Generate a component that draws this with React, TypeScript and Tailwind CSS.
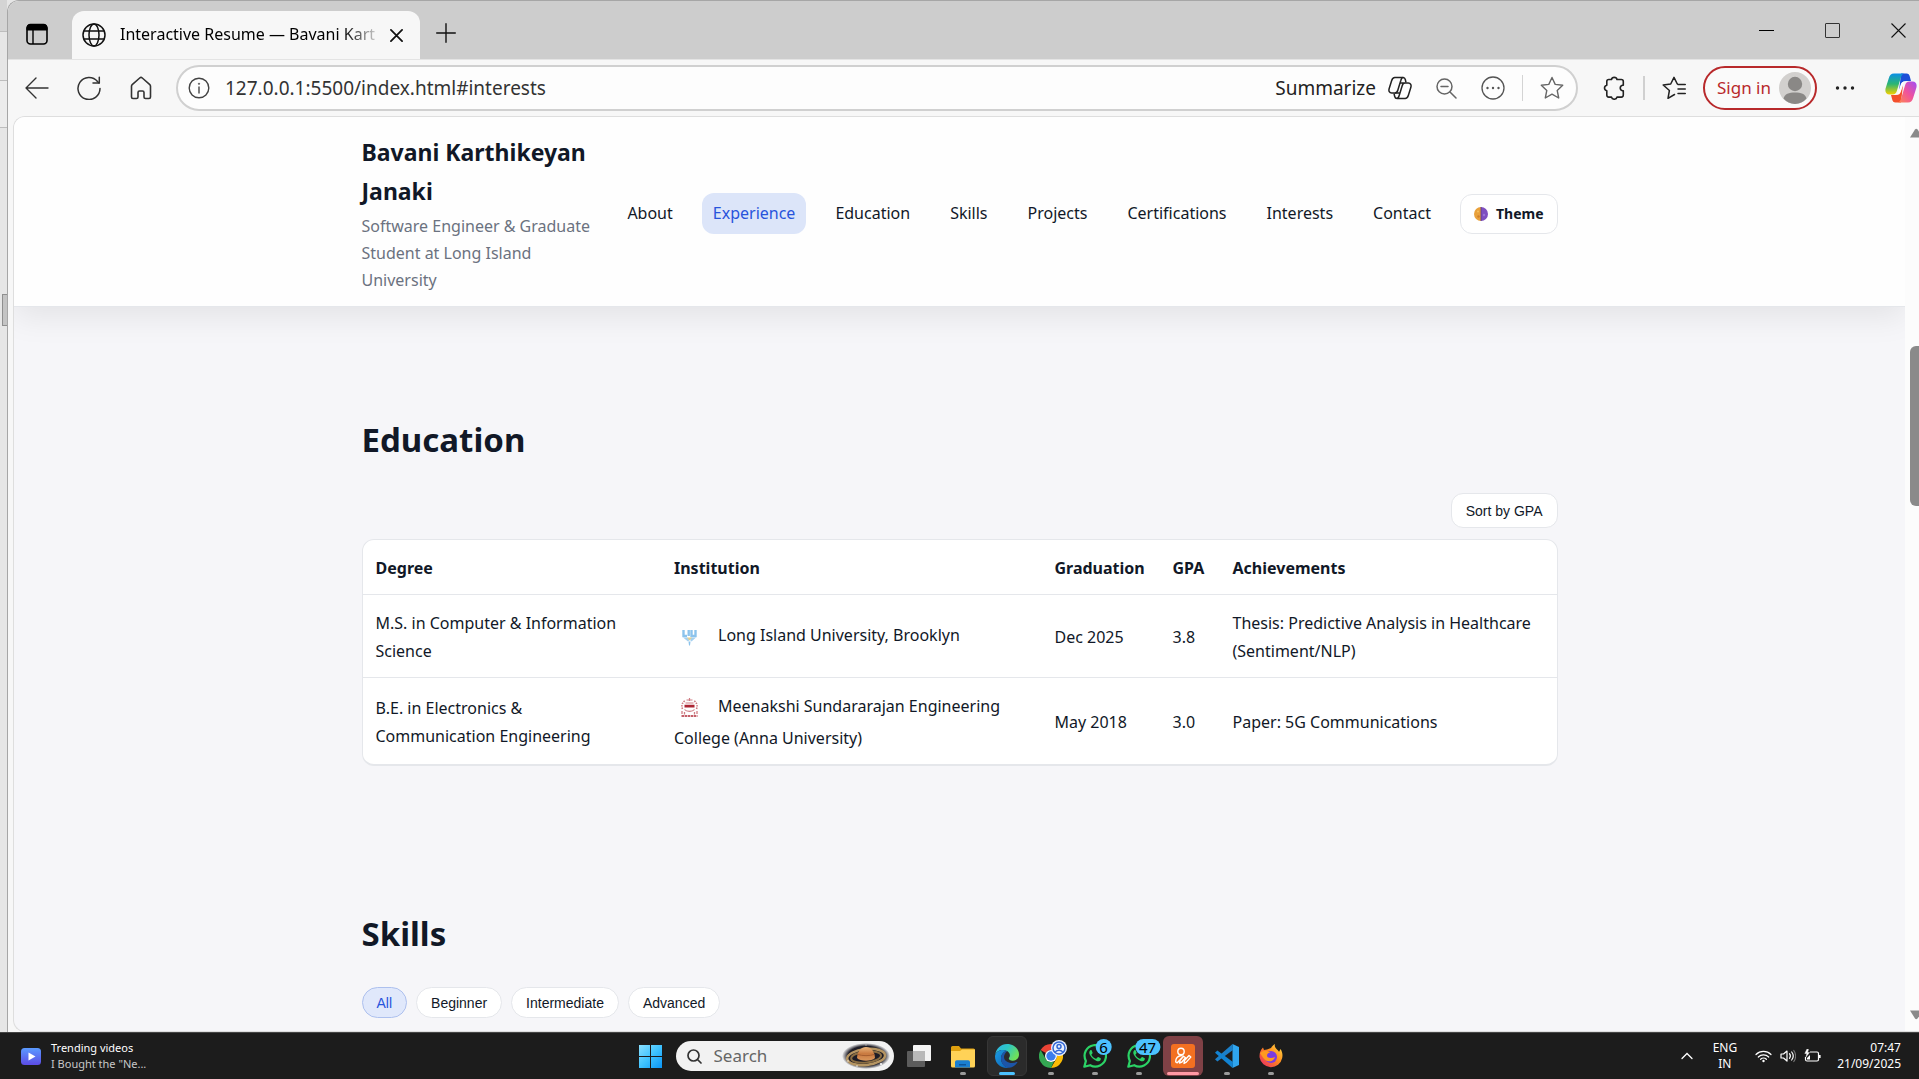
import React from "react";

type IconProps = { className?: string };

/* ---------- browser icons ---------- */

const TabActionsIcon = () => (
  <svg className="size-[22px]" viewBox="0 0 22 22" fill="none" stroke="#000">
    <rect x="1" y="1.5" width="20" height="19.5" rx="3.5" strokeWidth="1.6" />
    <path d="M1 7V5a3.500 3.500 0 0 1 3.500-3.500h13A3.500 3.500 0 0 1 21 5v2z" fill="#000" />
    <path d="M7 7v14" strokeWidth="1.4" />
  </svg>
);

const GlobeIcon = () => (
  <svg className="size-6 shrink-0" viewBox="0 0 24 24" fill="none" stroke="#111" strokeWidth="1.5">
    <circle cx="12" cy="12" r="11" />
    <ellipse cx="12" cy="12" rx="5" ry="11" />
    <path d="M2 8h20M2 16h20" />
  </svg>
);

const TabCloseIcon = () => (
  <svg className="size-[13px]" viewBox="0 0 14 14" fill="none" stroke="#111" strokeWidth="1.900" strokeLinecap="round">
    <path d="M1 1l12 12M13 1L1 13" />
  </svg>
);

const WindowCloseIcon = () => (
  <svg className="size-[15px]" viewBox="0 0 15 15" fill="none" stroke="#111" strokeWidth="1.100">
    <path d="M.5 .5l14 14M14.500 .5l-14 14" />
  </svg>
);

const PlusIcon = () => (
  <svg className="size-5" viewBox="0 0 20 20" fill="none" stroke="#111" strokeWidth="1.4" strokeLinecap="round">
    <path d="M10 .7v18.600M.7 10h18.600" />
  </svg>
);

const BackIcon = () => (
  <svg className="size-6" viewBox="0 0 24 24" fill="none" stroke="#333" strokeWidth="1.4" strokeLinecap="round" strokeLinejoin="round">
    <path d="M23 12H1M11 2L1 12l10 10" />
  </svg>
);

const ReloadIcon = () => (
  <svg className="size-6" viewBox="0 0 24 24" fill="none" stroke="#333" strokeWidth="1.500" strokeLinecap="round" strokeLinejoin="round">
    <path d="M23 12.500A11 11 0 1 1 20.500 5.500L22 7" />
    <path d="M22.300 1.200V7H16" />
  </svg>
);

const HomeIcon = () => (
  <svg className="size-6" viewBox="0 0 24 24" fill="none" stroke="#333" strokeWidth="1.600" strokeLinejoin="round">
    <path d="M2.500 10.200a2 2 0 0 1 .7-1.500L10.700 2a2 2 0 0 1 2.600 0l7.500 6.700a2 2 0 0 1 .7 1.500V21a1.500 1.500 0 0 1-1.500 1.500h-3.500A1.500 1.500 0 0 1 15 21v-4.500a1.500 1.500 0 0 0-1.500-1.500h-3A1.500 1.500 0 0 0 9 16.500V21a1.500 1.500 0 0 1-1.500 1.500H4A1.500 1.500 0 0 1 2.500 21z" />
  </svg>
);

const InfoIcon = () => (
  <svg className="size-[22px]" viewBox="0 0 22 22" fill="none" stroke="#444" strokeWidth="1.400">
    <circle cx="11" cy="11" r="9.800" />
    <path d="M11 10v6" strokeLinecap="round" />
    <circle cx="11" cy="6.800" r=".7" fill="#444" strokeWidth=".6" />
  </svg>
);

const CopilotOutlineIcon = () => (
  <svg className="size-6" viewBox="0 0 24 24" fill="none" stroke="#222" strokeWidth="1.500" strokeLinejoin="round">
    <path d="M6.800 1.500h8.200c1.300 0 2 .7 2.300 2l.7 3M6.800 1.500C5 1.500 4.200 2.800 3.600 4.700L1.200 12.500c-.8 2.500.2 4.500 2.500 4.500H7c1.500 0 2.300-1 2.800-2.700l3-9.800c.5-1.800 1.100-3 2.600-3" />
    <path d="M17.200 22.500H9c-1.300 0-2-.7-2.300-2L6 17.500M17.200 22.500c1.800 0 2.600-1.300 3.200-3.200l2.400-7.800c.8-2.500-.2-4.500-2.500-4.500H17c-1.500 0-2.300 1-2.800 2.700l-3 9.800c-.5 1.800-1.100 3-2.600 3M12 7h5M7 17h5" />
  </svg>
);

const ZoomOutIcon = () => (
  <svg className="size-[21px]" viewBox="0 0 21 21" fill="none" stroke="#666" strokeWidth="1.500" strokeLinecap="round">
    <circle cx="8.500" cy="8.500" r="7.500" />
    <path d="M5 8.500h7M14 14l6 6" />
  </svg>
);

const CircleDotsIcon = () => (
  <svg className="size-6" viewBox="0 0 24 24" fill="none" stroke="#555" strokeWidth="1.300">
    <circle cx="12" cy="12" r="11" />
    <g fill="#555" stroke="none">
      <circle cx="6.500" cy="12" r="1.200" />
      <circle cx="12" cy="12" r="1.200" />
      <circle cx="17.500" cy="12" r="1.200" />
    </g>
  </svg>
);

const StarIcon = () => (
  <svg className="size-6" viewBox="0 0 24 24" fill="none" stroke="#666" strokeWidth="1.400" strokeLinejoin="round">
    <path d="M12 1.500l3.200 6.900 7.500.9-5.500 5.100 1.500 7.600L12 18.200 5.300 22l1.500-7.600L1.300 9.300l7.500-.9z" />
  </svg>
);

const PuzzleIcon = () => (
  <svg className="size-6" viewBox="0 0 24 24" fill="none" stroke="#222" strokeWidth="1.600" strokeLinejoin="round">
    <path d="M9.500 3.500a2.800 2.600 0 0 1 5.500 0h4.300A2 2 0 0 1 21.300 5.500v3.800H20.500a2.800 2.800 0 0 0 0 5.500h.8v4.300a2 2 0 0 1-2 2H15a2.800 2.600 0 0 1-5.500 0H6.800a2 2 0 0 1-2-2v-4.300a2.800 2.800 0 0 1 0-5.500V5.500a2 2 0 0 1 2-2z" />
  </svg>
);

const FavoritesIcon = () => (
  <svg className="size-6" viewBox="0 0 24 24" fill="none" stroke="#222" strokeWidth="1.500" strokeLinejoin="round" strokeLinecap="round">
    <path d="M12.500 18.500L6 22.300l1.400-7.800L1.200 9l7.500-1L12 1.300 15.300 8M16 8.500h7.300M16 13h7.300M16 17.500h7.300" />
  </svg>
);

const AvatarIcon = () => (
  <svg className="size-8" viewBox="0 0 32 32">
    <circle cx="16" cy="16" r="16" fill="#d2d0ce" />
    <circle cx="16" cy="12" r="7.200" fill="#8a8886" />
    <path d="M4.500 26.500C5.500 22 10 20.500 16 20.500s10.500 1.500 11.500 6A16 16 0 0 1 16 32a16 16 0 0 1-11.500-5.500z" fill="#8a8886" />
  </svg>
);

const DotsIcon = () => (
  <svg className="h-2 w-5" viewBox="0 0 20 8" fill="#222">
    <circle cx="2.500" cy="4" r="1.700" />
    <circle cx="10" cy="4" r="1.700" />
    <circle cx="17.500" cy="4" r="1.700" />
  </svg>
);

const CopilotIcon = () => (
  <svg className="size-8" viewBox="0 0 32 32">
    <defs>
      <linearGradient id="cpA" x1="0" y1="0" x2="0" y2="1">
        <stop offset="0" stopColor="#0a8fe8" />
        <stop offset=".5" stopColor="#2bb673" />
        <stop offset="1" stopColor="#f5d000" />
      </linearGradient>
      <linearGradient id="cpB" x1="1" y1="0" x2="0" y2="1">
        <stop offset="0" stopColor="#a04cf5" />
        <stop offset=".5" stopColor="#f0529c" />
        <stop offset="1" stopColor="#ff8a4c" />
      </linearGradient>
    </defs>
    <path d="M16 1.500h5.500c2 0 2.800 1 3.300 3L26 9h-5c-3 0-4 1-5 4l-2 6z" fill="#1b4fd8" />
    <path d="M16 30.500h-5.500c-2 0-2.800-1-3.300-3L6 23h5c3 0 4-1 5-4l2-6z" fill="#f4502c" />
    <path d="M9 1.500h11c-2.500 0-3.500 2-4.300 4.500L12 18.500c-.8 2.700-2 4-4.500 4H4.500c-3.500 0-4.800-3-3.800-6.500l3-9.500C4.700 3 6 1.500 9 1.500z" fill="url(#cpA)" />
    <path d="M23 30.500H12c2.500 0 3.500-2 4.300-4.500L20 13.500c.8-2.700 2-4 4.500-4h3c3.500 0 4.800 3 3.800 6.500l-3 9.500c-1 3.500-2.300 5-5.300 5z" fill="url(#cpB)" />
    <path d="M20 9.500c-3 0-3.800 1.500-4.600 4l-2.200 7c-.5 1.600-1 2-2.200 2 3 0 4.200-1.500 5-4l2-6.500c.4-1.500 1-2.500 2-2.500z" fill="#fff" />
  </svg>
);

/* ---------- page drawings ---------- */

const ThemeIcon = () => (
  <svg className="size-3.5" viewBox="0 0 14 14">
    <path d="M7 0a7 7 0 0 0 0 14z" fill="#e9a13b" />
    <path d="M7 0a7 7 0 0 1 0 14z" fill="#7e4fc0" />
    <path d="M7 0v14" stroke="#5b3a86" strokeWidth=".8" />
    <circle cx="4" cy="4.500" r="1" fill="#f3c060" />
    <circle cx="4.500" cy="9.500" r="1.200" fill="#cf7f2c" />
    <circle cx="10" cy="8" r="1.200" fill="#9a74d6" />
  </svg>
);

const LiuLogo = () => (
  <svg className="mr-3 inline-block size-8 align-middle" viewBox="0 0 32 32">
    <g fill="none" stroke="#8cc3ec" strokeWidth="2.400">
      <path d="M9.500 9v6h3.500M14.700 9v6M17.500 9v6h4V9" />
    </g>
    <path d="M9 16.500h4.500l2 2.500-1.500 1.500zM22 16.500h-4.500L16 19l1.500 1.500z" fill="#a5d0ef" />
    <path d="M13 16.500h5l-2.500 3z" fill="#e6cf8d" />
    <path d="M14.500 20.500h2l-.5 4h-1z" fill="#8cc3ec" />
  </svg>
);

const MeenakshiLogo = () => (
  <svg className="mr-3 inline-block size-8 align-middle" viewBox="0 0 32 32" fill="none" stroke="#cf7c83">
    <path d="M8.500 17c-1.500-3.500 0-7 3-8.500M22.500 17c1.500-3.500 0-7-3-8.500" strokeDasharray="1.500 1" strokeWidth="1.600" />
    <path d="M12.500 8h6M15.500 6v3M11.500 11h8" strokeWidth="1.200" />
    <path d="M10.500 14.200h10" stroke="#ad2634" strokeWidth="2.800" />
    <path d="M10.500 17.500c2 2.500 8 2.500 10 0" strokeWidth="1.200" />
    <path d="M8 19v3M10.500 20v2.500M20.500 20v2.500M23 19v3" strokeWidth="1.300" />
    <path d="M7.500 24h16" stroke="#c4606a" strokeWidth="2.200" strokeDasharray="2.500 .6" />
  </svg>
);

/* ---------- taskbar drawings ---------- */

const VideoIcon = () => (
  <svg className="h-[17px] w-5" viewBox="0 0 20 17">
    <defs>
      <linearGradient id="vid" x1="0" y1="0" x2="0" y2="1">
        <stop offset="0" stopColor="#5b9bff" />
        <stop offset="1" stopColor="#5c4be6" />
      </linearGradient>
    </defs>
    <rect width="20" height="17" rx="3.500" fill="url(#vid)" />
    <path d="M7.500 4.500v8l7-4z" fill="#fff" />
  </svg>
);

const WindowsIcon = () => (
  <svg className="size-[23px]" viewBox="0 0 23 23">
    <defs>
      <linearGradient id="win" x1="0" y1="0" x2="1" y2="1">
        <stop offset="0" stopColor="#8be0ff" />
        <stop offset=".5" stopColor="#3fc3ff" />
        <stop offset="1" stopColor="#0a94f5" />
      </linearGradient>
    </defs>
    <path d="M0 0h11v11H0zM12 0h11v11H12zM0 12h11v11H0zM12 12h11v11H12z" fill="url(#win)" />
  </svg>
);

const SearchIcon = () => (
  <svg className="size-[15px]" viewBox="0 0 15 15" fill="none" stroke="#333" strokeWidth="1.700" strokeLinecap="round">
    <circle cx="6.500" cy="6.500" r="5.500" />
    <path d="M10.500 10.500l3.500 3.500" />
  </svg>
);

const SaturnIcon = () => (
  <svg className="h-[26px] w-12" viewBox="0 0 48 26">
    <defs>
      <radialGradient id="sky">
        <stop offset=".75" stopColor="#1d1c26" />
        <stop offset="1" stopColor="#1d1c26" stopOpacity="0" />
      </radialGradient>
      <linearGradient id="ball" x1="0" y1="0" x2="0" y2="1">
        <stop offset="0" stopColor="#e9b57c" />
        <stop offset=".5" stopColor="#c9793f" />
        <stop offset="1" stopColor="#d9975c" />
      </linearGradient>
    </defs>
    <ellipse cx="24" cy="13" rx="24" ry="13" fill="url(#sky)" />
    <g transform="rotate(-6 24 13)" fill="none">
      <ellipse cx="24" cy="14" rx="19" ry="8" stroke="#b59562" strokeWidth="2.500" />
      <ellipse cx="24" cy="14" rx="15" ry="5.500" stroke="#8a6d42" strokeWidth="2" />
    </g>
    <path d="M15 15a9 11 0 0 1 18 0c-3 3.500-15 3.500-18 0z" fill="url(#ball)" />
    <path d="M16 11.500c4 1.500 12 1.500 16 0" stroke="#a65e30" fill="none" />
    <g fill="#fff">
      <circle cx="6" cy="18" r=".7" />
      <circle cx="39" cy="21" r="1" />
      <circle cx="24" cy="2" r=".5" />
      <circle cx="15" cy="23" r=".7" />
    </g>
  </svg>
);

const TaskViewIcon = () => (
  <svg className="h-[22px] w-6" viewBox="0 0 24 22">
    <rect x="6" y="0" width="18" height="16" rx="1" fill="#f4f4f4" />
    <rect x="0" y="6" width="18" height="16" rx="1" fill="#5c5c5c" />
    <path d="M6 6h12v10H6z" fill="#b9b9b9" />
  </svg>
);

const FolderIcon = () => (
  <svg className="size-6" viewBox="0 0 24 24">
    <path d="M0 3.500A1.500 1.500 0 0 1 1.500 2H8l2 2.500H22.500A1.500 1.500 0 0 1 24 6v4H0z" fill="#dfa00f" />
    <path d="M0 7h9l2-1.500h13V22a1.500 1.500 0 0 1-1.500 1.500h-21A1.500 1.500 0 0 1 0 22z" fill="#ffd257" />
    <path d="M4 23.500V18a1.800 1.800 0 0 1 1.800-1.800h11.400A1.800 1.800 0 0 1 19 18v5.500z" fill="#1a7fd1" />
    <path d="M8 20h7v1.500H8z" fill="#0d559a" />
  </svg>
);

const EdgeIcon = () => (
  <svg className="size-6" viewBox="0 0 24 24">
    <defs>
      <linearGradient id="edA" x1="0" y1="0" x2="1" y2=".5">
        <stop offset="0" stopColor="#2fb4ec" />
        <stop offset=".5" stopColor="#2dc6c4" />
        <stop offset="1" stopColor="#6fe05a" />
      </linearGradient>
      <linearGradient id="edB" x1="0" y1="0" x2="1" y2="1">
        <stop offset="0" stopColor="#1b9de2" />
        <stop offset="1" stopColor="#0d5fb4" />
      </linearGradient>
    </defs>
    <path d="M.3 10.500C1.200 4.500 6 0 12 0c7 0 12 5 12 10.500 0 4-2.800 6.200-6.200 6.200-2.500 0-4-1-4-2.200 0-.8 1.100-1.300 1.100-3.200C14.900 8.500 12 6 8 6 4 6 1.200 8 .3 10.500z" fill="url(#edA)" />
    <path d="M0 12.500C.2 8.500 4 6 8 6c1.500 0 3 .4 4.200 1.200C8.500 7.200 6 10.500 6 14.500c0 4.500 3.500 8.500 8 9.300C6 25 0 19.500 0 12.500z" fill="url(#edB)" />
    <path d="M9 13c0-2.200 1.200-4 3.200-5.800C9 6.800 5.800 10.500 6 14.800 6.200 20 10 24 14.300 23.800c3.500-.4 6.200-2.300 8-5.200.3-.5-.1-.8-.6-.6-6 2.700-12.700-.4-12.700-5z" fill="#1c55a8" />
  </svg>
);

const ChromeIcon = () => (
  <svg className="size-6" viewBox="0 0 24 24">
    <path d="M12 0a12 12 0 0 1 10.400 6H12a6 6 0 0 0-5.200 3L1.600 6A12 12 0 0 1 12 0z" fill="#ea4335" />
    <path d="M22.400 6A12 12 0 0 1 12 24l5.200-9a6 6 0 0 0 0-6z" fill="#fbbc05" />
    <path d="M22.400 6H12l5.200 3z" fill="#ea4335" />
    <path d="M1.600 6l5.200 9a6 6 0 0 0 5.200 3 6 6 0 0 0 3.200-.9L12 24A12 12 0 0 1 1.600 6z" fill="#34a853" />
    <circle cx="12" cy="12" r="6" fill="#fff" />
    <circle cx="12" cy="12" r="4.700" fill="#3b7ded" />
  </svg>
);

const ProfileBadge = () => (
  <svg className="absolute -right-1 -top-1 size-4" viewBox="0 0 16 16">
    <circle cx="8" cy="8" r="8" fill="#e8f0fe" />
    <g fill="none" stroke="#3367d6" strokeWidth="1.500">
      <circle cx="8" cy="8" r="6" />
      <circle cx="8" cy="6.500" r="2" />
      <path d="M4 12.500c1.500-3 6.500-3 8 0" />
    </g>
  </svg>
);

const WhatsAppIcon = () => (
  <svg className="size-6" viewBox="0 0 24 24">
    <path d="M1.300 22.700l1.600-5.800A10.700 10.700 0 1 1 7.200 21.200z" fill="none" stroke="#2bd366" strokeWidth="2.200" strokeLinejoin="round" />
    <path d="M8.700 6.500c-.3-.6-1-.6-1.400-.2C6 7.500 6 9.200 7 11c1.600 2.800 3.600 4.700 6.600 5.900 1.700.6 3.300.2 4-1 .3-.7.300-1.400.1-1.600l-2.400-1.200c-.4-.2-.6 0-.9.400l-.9 1.100c-.2.200-.5.200-.8.100-2-.9-3.200-2-4.200-3.800-.2-.3 0-.5.200-.7l.8-1c.1-.2.100-.4 0-.6z" fill="#2bd366" />
  </svg>
);

const PencilAppIcon = () => (
  <svg className="size-6" viewBox="0 0 24 24">
    <rect width="24" height="24" rx="3" fill="#f37021" />
    <g fill="none" stroke="#fff" strokeWidth="1.400" strokeLinejoin="round" strokeLinecap="round">
      <circle cx="10" cy="7.500" r="3.200" />
      <path d="M11 11.500c-4 0-6.500 2.500-6.300 6.500l1.500.8 6.300-6.500M13 19.500l.5-3 4.500-5 1.800 1.600-4.500 5zM8.500 19l.6-2.800 3.400-4 2 1.600-3.600 4.200z" />
    </g>
  </svg>
);

const VsCodeIcon = () => (
  <svg className="size-6" viewBox="0 0 24 24">
    <path d="M17.500 0L24 3v18l-6.500 3z" fill="#2fa5ee" />
    <path d="M17.500 0L0 15.200l2.300 2.300L18 6z" fill="#1b7fc8" />
    <path d="M17.500 24L0 8.800l2.300-2.300L18 18z" fill="#1283d2" />
  </svg>
);

const FirefoxIcon = () => (
  <svg className="size-6" viewBox="0 0 24 24">
    <defs>
      <linearGradient id="ff" x1="1" y1="0" x2="0" y2="1">
        <stop offset="0" stopColor="#ffe14a" />
        <stop offset=".45" stopColor="#ff8a1c" />
        <stop offset="1" stopColor="#e8216b" />
      </linearGradient>
    </defs>
    <path d="M16 0c-.8 2.500.3 3.800 2 5.500 1.200 1 1.700 1.600 2 2.500l1.500-3c2 3 2.300 6 1.700 9A11.500 11.500 0 0 1 .6 13.500C.2 9.500 1.500 6 4 3.500L5 6l3-.5L12 4c1-1.800 2.300-3 4-4z" fill="url(#ff)" />
    <circle cx="12" cy="13" r="6" fill="#7a3be0" />
    <path d="M1 9c3-3 7-2.500 10.500-.5-1.500 0-3.500 1-3.500 3 0 3 5 3 8 1.500-1 4-5 5-8 4C4.500 15.500 3 12 1 9z" fill="#ff9a20" />
  </svg>
);

const WifiIcon = () => (
  <svg className="h-3.5 w-[17px]" viewBox="0 0 17 14" fill="none" stroke="#fff" strokeWidth="1.200" strokeLinecap="round">
    <path d="M1 5.500a10.500 10.500 0 0 1 15 0M3.300 8a7.400 7.400 0 0 1 10.400 0M5.600 10.300a4.200 4.200 0 0 1 5.800 0" />
    <circle cx="8.500" cy="12" r="1.200" fill="#fff" stroke="none" />
  </svg>
);

const VolumeIcon = () => (
  <svg className="h-3.5 w-4" viewBox="0 0 16 14" fill="none" stroke="#fff" strokeWidth="1.200" strokeLinecap="round" strokeLinejoin="round">
    <path d="M1 5v4h2.500L7 12V2L3.500 5zM9.500 4.700c1 1.300 1 3.300 0 4.600M11.700 3c1.800 2.300 1.800 5.700 0 8" />
    <path d="M13.800 1.500c2.300 3.200 2.300 7.800 0 11" stroke="#777" />
  </svg>
);

const BatteryIcon = () => (
  <svg className="h-3.5 w-[17px]" viewBox="0 0 17 14" fill="none" stroke="#fff" strokeWidth="1.200" strokeLinejoin="round">
    <path d="M6 3h7a1.500 1.500 0 0 1 1.500 1.500v6A1.500 1.500 0 0 1 13 12H3a1.500 1.500 0 0 1-1.500-1.500V8" />
    <path d="M15.800 6v3" strokeWidth="1.600" />
    <path d="M3 0L.8 4.500h2L2 8l3.500-4.500h-2L4.500.5z" fill="#fff" strokeWidth=".4" />
    <path d="M3 10.500V9l3-3v4.500z" fill="#fff" stroke="none" />
  </svg>
);

/* ---------- browser chrome ---------- */

function TitleBar() {
  return (
    <div className="flex h-[58px] items-end bg-[#cdcdcd]">
      <button aria-label="Tab actions" className="mb-3.5 ml-[18px] mr-6">
        <TabActionsIcon />
      </button>
      <div className="flex h-12 w-[348px] items-center gap-[14px] rounded-t-xl bg-[#f7f7f7] pl-[10px] pr-4">
        <GlobeIcon />
        <span className="-mt-0.5 w-[256px] shrink-0 whitespace-nowrap bg-gradient-to-r from-black from-85% to-[#d0d0d0] bg-clip-text text-base text-transparent">
          Interactive Resume — Bavani Kart
        </span>
        <button aria-label="Close tab">
          <TabCloseIcon />
        </button>
      </div>
      <button aria-label="New tab" className="mb-4 ml-4">
        <PlusIcon />
      </button>
      <div className="ml-auto flex h-full items-center gap-[51px] pr-[13px]">
        <button aria-label="Minimize" className="h-px w-[15px] bg-black" />
        <button aria-label="Maximize" className="size-[15px] rounded-[1px] border border-[#333]" />
        <button aria-label="Close window">
          <WindowCloseIcon />
        </button>
      </div>
    </div>
  );
}

function Toolbar() {
  return (
    <div className="flex h-[57px] items-center border-t border-[#e4e4e4] bg-[#f7f7f7] pl-[17px]">
      <div className="flex items-center gap-7 pr-[23px]">
        <button aria-label="Back"><BackIcon /></button>
        <button aria-label="Reload"><ReloadIcon /></button>
        <button aria-label="Home"><HomeIcon /></button>
      </div>
      <div className="flex h-[46px] flex-1 items-center rounded-full border-2 border-[#d0d0d0] bg-[#fdfdfd] pl-[10px] pr-3">
        <InfoIcon />
        <input
          aria-label="Address"
          defaultValue="127.0.0.1:5500/index.html#interests"
          className="ml-[15px] min-w-0 flex-1 bg-transparent text-[19px] text-[#333] outline-none"
        />
        <button className="flex items-center gap-3 text-[19px] text-[#222]">
          Summarize
          <CopilotOutlineIcon />
        </button>
        <button aria-label="Zoom out" className="ml-6"><ZoomOutIcon /></button>
        <button aria-label="More" className="ml-6"><CircleDotsIcon /></button>
        <span className="mx-[17px] h-[26px] w-px bg-[#d4d4d4]" />
        <button aria-label="Add to favorites"><StarIcon /></button>
      </div>
      <button aria-label="Extensions" className="ml-6"><PuzzleIcon /></button>
      <span className="mx-[17px] h-6 w-0.5 bg-[#d0d0d0]" />
      <button aria-label="Favorites"><FavoritesIcon /></button>
      <button className="ml-[17px] flex h-11 items-center gap-2 rounded-full border-2 border-[#b8292b] bg-[#fafafa] pl-3 pr-1 text-[17px] text-[#b8292b]">
        Sign in
        <AvatarIcon />
      </button>
      <button aria-label="Settings" className="ml-[18px]"><DotsIcon /></button>
      <button aria-label="Copilot" className="ml-[30px] mr-0.5"><CopilotIcon /></button>
    </div>
  );
}

/* ---------- page ---------- */

const NAV = ["About", "Experience", "Education", "Skills", "Projects", "Certifications", "Interests", "Contact"];

function PageHeader() {
  return (
    <header className="relative border-b border-[#e5e7eb] bg-[#fefefe] pb-3 pt-4 shadow-[0_10px_30px_rgba(0,0,0,0.08)]">
      <div className="mx-auto flex max-w-[1196px] items-center justify-between">
        <div className="w-[230px]">
          <h1 className="text-[23px] font-bold leading-[39px] text-[#111827]">Bavani Karthikeyan Janaki</h1>
          <p className="mt-0.5 text-base leading-[27px] text-[#6b7280]">
            Software Engineer &amp; Graduate Student at Long Island University
          </p>
        </div>
        <nav className="flex items-center gap-[18px]">
          {NAV.map((label) => (
            <a
              key={label}
              href={"#" + label.toLowerCase()}
              className={
                label === "Experience"
                  ? "rounded-xl bg-[#dce5f9] px-[11px] py-[7px] text-base leading-[27px] text-[#2854dc]"
                  : "rounded-xl px-[11px] py-[7px] text-base leading-[27px] text-[#111827]"
              }
            >
              {label}
            </a>
          ))}
          <button className="flex h-10 items-center gap-2 rounded-xl border border-[#e5e7eb] bg-white px-[13px] text-sm font-bold text-[#111827]">
            <ThemeIcon />
            Theme
          </button>
        </nav>
      </div>
    </header>
  );
}

const ROWS = [
  {
    degree: "M.S. in Computer & Information Science",
    logo: <LiuLogo />,
    school: "Long Island University, Brooklyn",
    date: "Dec 2025",
    gpa: "3.8",
    note: "Thesis: Predictive Analysis in Healthcare (Sentiment/NLP)",
  },
  {
    degree: "B.E. in Electronics & Communication Engineering",
    logo: <MeenakshiLogo />,
    school: "Meenakshi Sundararajan Engineering College (Anna University)",
    date: "May 2018",
    gpa: "3.0",
    note: "Paper: 5G Communications",
  },
];

function Education() {
  return (
    <section id="education" className="pt-[104px]">
      <h2 className="mb-6 text-[33px] font-bold leading-[58px]">Education</h2>
      <div className="mb-[11px] flex justify-end">
        <button className="h-[35px] rounded-xl border border-[#e5e7eb] bg-white px-[14px] font-['Liberation_Sans',sans-serif] text-sm">
          Sort by GPA
        </button>
      </div>
      <div className="overflow-hidden rounded-xl border border-b-2 border-[#e5e7eb] bg-white">
        <table className="w-full table-fixed border-collapse text-left text-base leading-7">
          <colgroup>
            <col className="w-[25%]" />
            <col />
            <col className="w-[118px]" />
            <col className="w-[60px]" />
            <col className="w-[337px]" />
          </colgroup>
          <thead>
            <tr className="border-b border-[#e5e7eb]">
              {["Degree", "Institution", "Graduation", "GPA", "Achievements"].map((h) => (
                <th key={h} scope="col" className="pb-3 pl-[13px] pt-[14px] font-bold">{h}</th>
              ))}
            </tr>
          </thead>
          <tbody>
            {ROWS.map((r) => (
              <tr key={r.gpa} className="border-b border-[#e5e7eb] last:border-b-0">
                <td className="pb-3 pl-[13px] pr-8 pt-[14px]">{r.degree}</td>
                <td className="px-[13px] pb-3 pt-[14px]">{r.logo}{r.school}</td>
                <td className="pb-3 pl-[13px] pt-[14px]">{r.date}</td>
                <td className="pb-3 pl-[13px] pt-[14px]">{r.gpa}</td>
                <td className="px-[13px] pb-3 pt-[14px]">{r.note}</td>
              </tr>
            ))}
          </tbody>
        </table>
      </div>
    </section>
  );
}

function Skills() {
  return (
    <section id="skills" className="pt-[139px]">
      <h2 className="mb-6 text-[33px] font-bold leading-[58px]">Skills</h2>
      <div className="flex gap-[9px] font-['Liberation_Sans',sans-serif] text-sm">
        {["All", "Beginner", "Intermediate", "Advanced"].map((s) => (
          <button
            key={s}
            className={
              s === "All"
                ? "h-[31px] rounded-full border border-[#adc0ee] bg-[#e0e8fb] px-[14px] text-[#2854dc]"
                : "h-[31px] rounded-full border border-[#e5e7eb] bg-white px-[14px]"
            }
          >
            {s}
          </button>
        ))}
      </div>
    </section>
  );
}

function ScrollBar() {
  return (
    <div className="flex w-3.5 flex-col items-end overflow-hidden bg-[#fcfcfc] py-[11px]">
      <svg className="h-2.5 w-[9px]" viewBox="0 0 9 10" fill="#8a8a8a">
        <path d="M0 9.500L5 1.500q1-1.500 2.500 0L9 3.500v6z" />
      </svg>
      <div className="mt-[208px] h-40 w-[9px] rounded-l-md bg-[#8a8a8a]" />
      <svg className="mt-auto h-2.5 w-[9px]" viewBox="0 0 9 10" fill="#8a8a8a">
        <path d="M0 .5L5 8.500q1 1.500 2.500 0L9 6.500v-6z" />
      </svg>
    </div>
  );
}

/* ---------- taskbar ---------- */

type TaskApp = { name: string; icon: React.ReactNode; badge?: string; state: "run" | "active" | "alert" };

const APPS: TaskApp[] = [
  { name: "File Explorer", icon: <FolderIcon />, state: "run" },
  { name: "Edge", icon: <EdgeIcon />, state: "active" },
  { name: "Chrome", icon: <><ChromeIcon /><ProfileBadge /></>, state: "run" },
  { name: "WhatsApp", icon: <WhatsAppIcon />, badge: "6", state: "run" },
  { name: "WhatsApp Business", icon: <WhatsAppIcon />, badge: "47", state: "run" },
  { name: "Sketch", icon: <PencilAppIcon />, state: "alert" },
  { name: "Visual Studio Code", icon: <VsCodeIcon />, state: "run" },
  { name: "Firefox", icon: <FirefoxIcon />, state: "run" },
];

const TILE = {
  run: "relative flex size-10 items-center justify-center rounded-md",
  active: "relative flex size-10 items-center justify-center rounded-md border border-[#363636] bg-[#2b2b2b]",
  alert: "relative flex size-10 items-center justify-center rounded-md bg-[#7f4146]",
};

const BAR = {
  run: "absolute bottom-px h-[3px] w-1.5 rounded-full bg-[#9a9a9a]",
  active: "absolute bottom-0 h-[3px] w-4 rounded-full bg-[#4cc2ff]",
  alert: "absolute bottom-px h-[3px] w-8 rounded-full bg-[#ff99a4]",
};

function Taskbar() {
  return (
    <footer className="grid h-[47px] shrink-0 grid-cols-[1fr_auto_1fr] items-center border-t border-[#454545] bg-[#1c1c1c] text-white">
      <button className="flex items-center gap-[10px] pl-[21px] text-left text-[11px] leading-4">
        <VideoIcon />
        <span>
          <span className="block">Trending videos</span>
          <span className="block text-[#c8c8c8]">I Bought the "Ne...</span>
        </span>
      </button>
      <div className="flex items-center pl-[10px]">
        <button aria-label="Start"><WindowsIcon /></button>
        <label className="ml-3.5 flex h-[30px] w-[218px] items-center gap-3 rounded-full bg-[#f2f2f2] pl-[11px] pr-1">
          <SearchIcon />
          <input
            aria-label="Search"
            placeholder="Search"
            className="min-w-0 flex-1 bg-transparent text-[17px] text-[#222] outline-none placeholder:text-[#666]"
          />
          <SaturnIcon />
        </label>
        <button aria-label="Task view" className="ml-[13px] mr-3"><TaskViewIcon /></button>
        <div className="flex gap-1">
          {APPS.map((a) => (
            <button key={a.name} aria-label={a.name} className={TILE[a.state]}>
              <span className="relative">
                {a.icon}
                {a.badge && (
                  <span className="absolute -top-[5px] left-[21px] flex h-4 -translate-x-1/2 items-center justify-center rounded-full bg-[#4cc2ff] px-1 text-[15px] leading-4 text-black">
                    {a.badge}
                  </span>
                )}
              </span>
              <span className={BAR[a.state]} />
            </button>
          ))}
        </div>
      </div>
      <div className="flex items-center justify-end pr-[18px] text-xs leading-4">
        <button aria-label="Show hidden icons">
          <svg className="h-2 w-3" viewBox="0 0 12 8" fill="none" stroke="#fff" strokeWidth="1.300" strokeLinecap="round">
            <path d="M1 6.500l5-5 5 5" />
          </svg>
        </button>
        <button className="ml-5 text-center">ENG<br />IN</button>
        <button aria-label="Network, sound and battery" className="ml-[18px] flex items-center gap-2">
          <WifiIcon />
          <VolumeIcon />
          <BatteryIcon />
        </button>
        <button className="ml-4 text-right">07:47<br />21/09/2025</button>
      </div>
    </footer>
  );
}

export default function App() {
  return (
    <div className="flex h-screen flex-col overflow-hidden font-['Noto_Sans','Open_Sans',sans-serif] text-[#111827]">
      <div className="flex min-h-0 flex-1 bg-[#e6e6e6]">
        <div className="flex w-[7px] shrink-0 flex-col">
          <div className="h-8 border-b border-[#bdbdbd] bg-[#d4d4d4]" />
          <div className="h-[49px] border-b border-[#bdbdbd]" />
          <div className="h-[47px] border-b border-[#bdbdbd] bg-[#ececec]" />
          <div className="ml-0.5 mt-[166px] h-8 border border-r-0 border-[#8f8f8f] bg-[#c4c4c4]" />
        </div>
        <div className="flex min-w-0 flex-1 flex-col overflow-hidden rounded-tl-xl border-l border-t border-[#a6a6a6] bg-[#f7f7f7]">
          <TitleBar />
          <Toolbar />
          <div className="ml-[5px] flex min-h-0 flex-1 overflow-hidden rounded-l-xl border border-r-0 border-[#dedede] bg-[#f6f6f9]">
            <main className="min-w-0 flex-1 overflow-hidden">
              <PageHeader />
              <div className="mx-auto max-w-[1196px]">
                <Education />
                <Skills />
              </div>
            </main>
            <ScrollBar />
          </div>
        </div>
      </div>
      <Taskbar />
    </div>
  );
}
